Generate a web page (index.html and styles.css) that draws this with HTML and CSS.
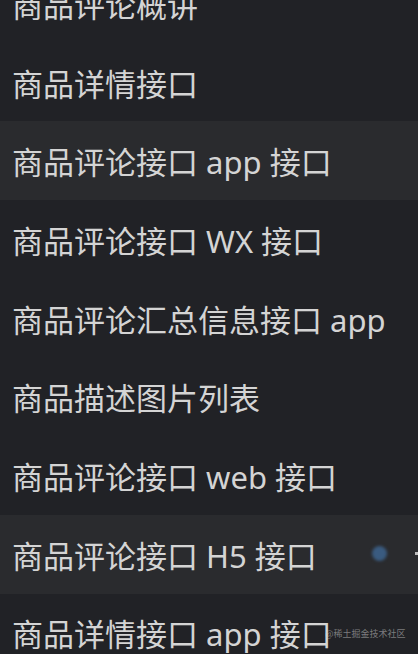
FILE: index.html
```html
<!DOCTYPE html>
<html lang="zh-CN">
<head>
<meta charset="utf-8">
<title>接口列表</title>
<link rel="stylesheet" href="styles.css">
</head>
<body>
<ul class="menu">
  <li class="item">商品评论概讲</li>
  <li class="item">商品详情接口</li>
  <li class="item active">商品评论接口 app 接口</li>
  <li class="item">商品评论接口 WX 接口</li>
  <li class="item">商品评论汇总信息接口 app</li>
  <li class="item">商品描述图片列表</li>
  <li class="item">商品评论接口 web 接口</li>
  <li class="item active">商品评论接口 H5 接口<span class="dot"></span><span class="edge"></span></li>
  <li class="item">商品详情接口 app 接口<span class="mark">@稀土掘金技术社区</span></li>
</ul>
</body>
</html>
```
FILE: styles.css
```css
html, body {
  margin: 0;
  padding: 0;
  background: #212226;
  overflow: hidden;
  height: 654px;
}
.menu {
  list-style: none;
  margin: -36px 0 0 0;
  padding: 0;
}
.item {
  position: relative;
  display: flex;
  align-items: center;
  height: 78.7px;
  padding-left: 12px;
  font-family: "Noto Sans", "Noto Sans CJK SC", sans-serif;
  font-size: 31px;
  color: #d4d4d4;
  white-space: nowrap;
  box-sizing: border-box;
}
.item.active {
  background: #2a2b2e;
}
.dot {
  position: absolute;
  left: 372px;
  top: 31px;
  width: 15px;
  height: 15px;
  border-radius: 50%;
  background: #3a5b80;
  filter: blur(1.5px);
}
.edge {
  position: absolute;
  left: 415px;
  top: 37px;
  width: 4px;
  height: 3px;
  background: #bdbdbd;
  filter: blur(0.6px);
}
.mark {
  position: absolute;
  left: 325px;
  top: 33px;
  font-family: "Noto Sans CJK SC", sans-serif;
  font-size: 9px;
  color: rgba(200, 200, 200, 0.55);
}
```
